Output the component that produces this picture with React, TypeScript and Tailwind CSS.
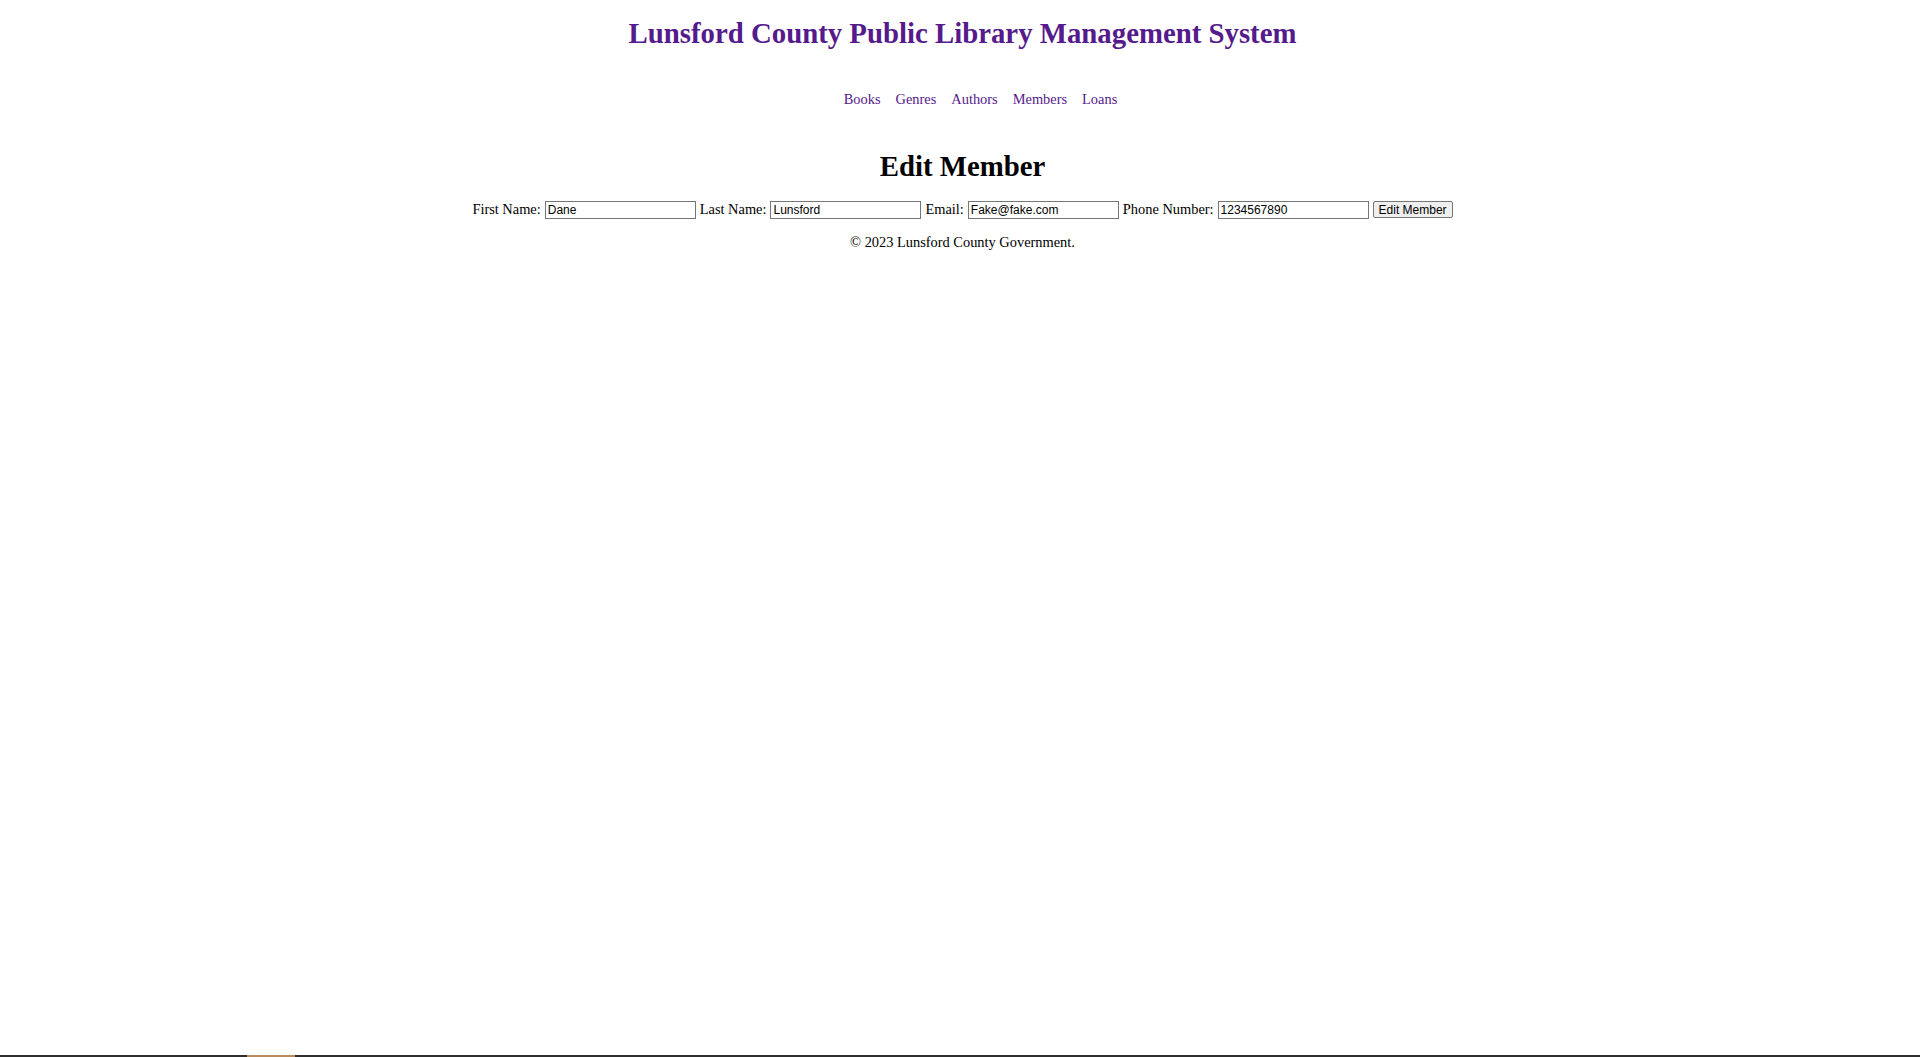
import React from 'react'

const links = ['Books', 'Genres', 'Authors', 'Members', 'Loans']

const fields = [
  { label: 'First Name:', value: 'Dane' },
  { label: 'Last Name:', value: 'Lunsford' },
  { label: 'Email:', value: 'Fake@fake.com' },
  { label: 'Phone Number:', value: '1234567890' },
]

export default function App() {
  return (
    <div className="min-h-[1057px] flex flex-col bg-white text-black font-['Liberation_Serif','Times_New_Roman',serif] text-[14.4px]">
      <div className="flex flex-col items-center pl-[5px]">
        <h1 className="mt-[17px] text-[28.8px] leading-[33px] font-bold text-[#551A8B]">
          Lunsford County Public Library Management System
        </h1>

        <ul className="mt-[41px] pl-[36px] flex justify-center gap-[15px] leading-[16.5px]">
          {links.map((l) => (
            <li key={l}>
              <a href="#" className="text-[#551A8B] no-underline">{l}</a>
            </li>
          ))}
        </ul>

        <h2 className="mt-[42px] text-[28.8px] leading-[33px] font-bold">Edit Member</h2>

        <form className="mt-[18px] flex items-center justify-center gap-[4px] h-[18px]" onSubmit={(e) => e.preventDefault()}>
          {fields.map((f) => (
            <React.Fragment key={f.label}>
              <span className="leading-[16.5px]">{f.label}</span>
              <input
                type="text"
                defaultValue={f.value}
                className="w-[151px] h-[18px] border border-[#767676] px-[2px] text-[12px] font-['Liberation_Sans',Arial,sans-serif] text-black outline-none"
              />
            </React.Fragment>
          ))}
          <button
            type="submit"
            className="h-[17px] px-[5px] border border-[#767676] rounded-[2px] bg-[#efefef] text-[12px] leading-[14px] font-['Liberation_Sans',Arial,sans-serif] text-black"
          >
            Edit Member
          </button>
        </form>

        <p className="mt-[15px] leading-[16.5px]">© 2023 Lunsford County Government.</p>
      </div>

      <div className="flex-1" />
      <div className="h-[2px] bg-[#2e2e2e] flex">
        <div className="w-[247px]" />
        <div className="w-[48px] bg-[#b98a5c]" />
      </div>
    </div>
  )
}
